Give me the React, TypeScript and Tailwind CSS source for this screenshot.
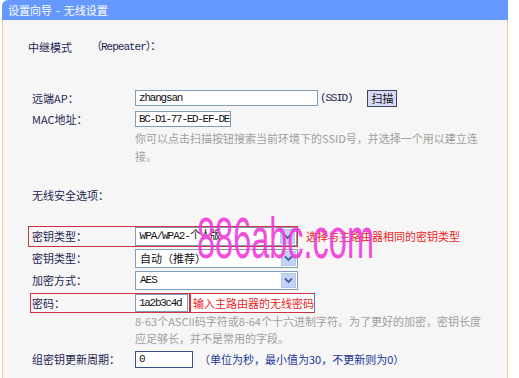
import React from "react";

const cjk = { fontFamily: '"Noto Sans CJK SC", "Noto Sans", sans-serif' };
const mono = { fontFamily: '"Liberation Mono", "Noto Sans CJK SC", monospace' };

function Arrow() {
  return (
    <div className="w-[15px] h-[15px] bg-[#c3d3f8] border border-[#b4c6ee] flex items-center justify-center mr-[1px]">
      <svg width="9" height="7" viewBox="0 0 9 7">
        <path d="M1 1.5 L4.5 5 L8 1.5" stroke="#4a5f8c" strokeWidth="1.8" fill="none" />
      </svg>
    </div>
  );
}

function Select({ text, monoText }: { text: string; monoText?: boolean }) {
  return (
    <div className="w-[163px] h-[19px] bg-white border border-[#7f9db9] flex items-center justify-between">
      <span
        className={monoText ? "pl-[4px] text-[11px] text-[#111] tracking-[-1px]" : "pl-[4px] text-[11px] text-[#111]"}
        style={monoText ? mono : cjk}
      >
        {text}
      </span>
      <Arrow />
    </div>
  );
}

export default function App() {
  return (
    <div className="w-[519px] h-[378px] bg-white overflow-hidden relative" style={cjk}>
      <div className="ml-[2px] w-[506px] h-[378px] flex flex-col">
        <div className="h-[20px] bg-[#6699ff] rounded-tl-[6px] flex items-center pl-[6px] text-white text-[11px] shrink-0">
          <span>设置向导</span>
          <span className="mx-[4px]">-</span>
          <span>无线设置</span>
        </div>
        <div className="flex-1 bg-[#f6f6f6] border-l border-r border-[#f2c88c] pl-[29px] flex flex-col text-[11px] text-[#1c2552]">
          {/* 中继模式 */}
          <div className="mt-[17px] h-[20px] flex items-center ml-[-4px]">
            <span className="w-[63px]">中继模式</span>
            <span style={mono} className="tracking-[-1px]">（Repeater）：</span>
          </div>
          {/* 远端AP */}
          <div className="mt-[32px] h-[18px] flex items-center">
            <span className="w-[103px]">远端AP：</span>
            <div className="w-[183px] h-[16px] bg-white border border-[#7f9db9] flex items-center pl-[3px]">
              <span style={mono} className="text-[11px] text-[#111] tracking-[-1.2px]">zhangsan</span>
            </div>
            <span style={mono} className="ml-[2px] text-[11px] tracking-[-1.2px] text-[#1c2552]">(SSID)</span>
            <div className="ml-[15px] w-[30px] h-[17px] bg-[#d6daf6] border border-[#404060] flex items-center justify-center text-[#111] text-[11px]">
              扫描
            </div>
          </div>
          {/* MAC */}
          <div className="mt-[3px] h-[18px] flex items-center">
            <span className="w-[103px]">MAC地址：</span>
            <div className="w-[96px] h-[16px] bg-white border border-[#7f9db9] flex items-center pl-[3px]">
              <span style={mono} className="text-[11px] text-[#111] tracking-[-1.3px]">BC-D1-77-ED-EF-DE</span>
            </div>
          </div>
          <div className="pl-[103px] text-[#a0a0a0] leading-[18px] mt-[1px] w-[470px]">
            你可以点击扫描按钮搜索当前环境下的SSID号，并选择一个用以建立连
            <br />
            接。
          </div>
          {/* 无线安全选项 */}
          <div className="mt-[20px] h-[20px] flex items-center">
            <span>无线安全选项：</span>
          </div>
          {/* red box row */}
          <div className="mt-[21px] ml-[-4px] w-[270px] h-[21px] border border-[#cc3344] flex items-center pl-[3px] relative">
            <span className="w-[103px]">密钥类型：</span>
            <Select text="WPA/WPA2-个人版" monoText />
            <span className="absolute left-[277px] text-[#ee2222] whitespace-nowrap">选择与主路由器相同的密钥类型</span>
          </div>
          <div className="mt-[2px] h-[19px] flex items-center">
            <span className="w-[103px]">密钥类型：</span>
            <Select text="自动（推荐）" />
          </div>
          <div className="mt-[3px] h-[19px] flex items-center">
            <span className="w-[103px]">加密方式：</span>
            <Select text="AES" monoText />
          </div>
          {/* 密码 */}
          <div className="mt-[3px] flex items-center ml-[-2px]">
            <div className="w-[160px] h-[20px] border border-[#cc3344] flex items-center pl-[1px]">
              <span className="w-[103px]">密码：</span>
              <div className="w-[53px] h-[18px] bg-white border border-[#7f9db9] flex items-center pl-[3px]">
                <span style={mono} className="text-[11px] text-[#111] tracking-[-1.3px]">1a2b3c4d</span>
              </div>
            </div>
            <div className="w-[125px] h-[20px] bg-white border border-[#cc3344] border-r-[#5a6fb0] flex items-center pl-[2px] text-[#ee2222] whitespace-nowrap overflow-hidden">
              输入主路由器的无线密码
            </div>
          </div>
          <div className="pl-[103px] text-[#a0a0a0] leading-[17px] w-[470px]">
            8-63个ASCII码字符或8-64个十六进制字符。为了更好的加密，密钥长度
            <br />
            应足够长，并不是常用的字段。
          </div>
          {/* 组密钥 */}
          <div className="mt-[4px] h-[17px] flex items-center">
            <span className="w-[103px]">组密钥更新周期：</span>
            <div className="w-[58px] h-[17px] bg-white border border-[#3d4f8a] flex items-center pl-[3px]">
              <span style={mono} className="text-[11px] text-[#111]">0</span>
            </div>
            <span className="ml-[6px] text-[#1a3596]">（单位为秒，最小值为30，不更新则为0）</span>
          </div>
        </div>
      </div>
      {/* watermark */}
      <div
        className="absolute left-[197px] top-[210px] text-[57px] leading-none text-[#f23ad8] opacity-90 whitespace-nowrap origin-left scale-x-[0.57] pointer-events-none"
        style={{ fontFamily: '"Liberation Sans", Arial, sans-serif' }}
      >
        886abc.com
      </div>
    </div>
  );
}
